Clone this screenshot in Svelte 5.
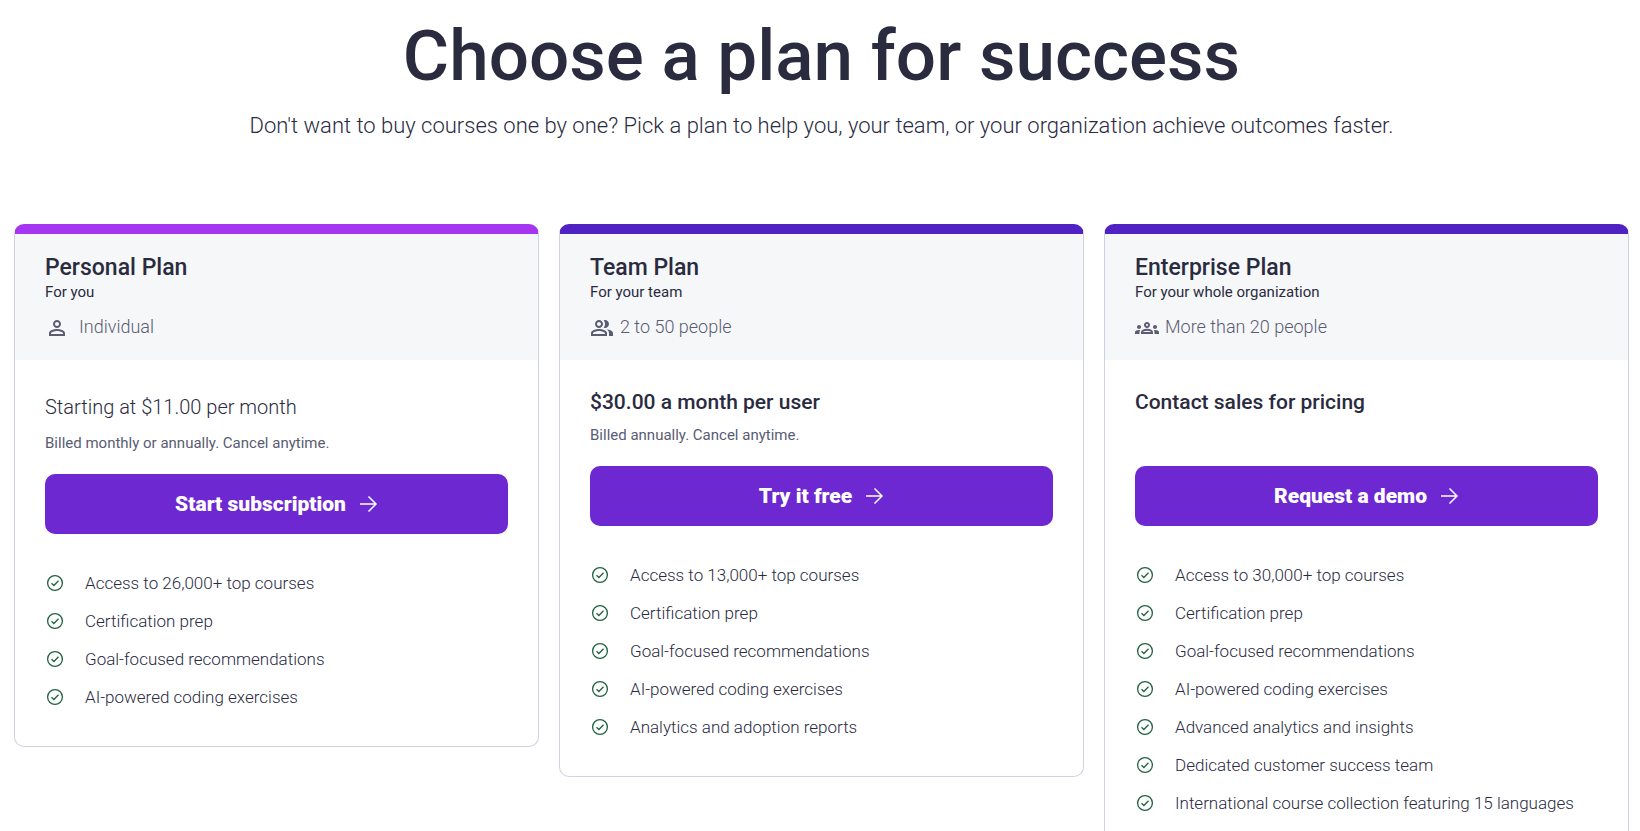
<script lang="ts">
  type Plan = {
    name: string;
    audience: string;
    size: string;
    icon: string;
    accent: string;
    price: string;
    strong: boolean;
    billing: string;
    action: string;
    features: string[];
  };

  const plans: Plan[] = [
    {
      name: "Personal Plan",
      audience: "For you",
      size: "Individual",
      icon: "person",
      accent: "light",
      price: "Starting at $11.00 per month",
      strong: false,
      billing: "Billed monthly or annually. Cancel anytime.",
      action: "Start subscription",
      features: [
        "Access to 26,000+ top courses",
        "Certification prep",
        "Goal-focused recommendations",
        "AI-powered coding exercises",
      ],
    },
    {
      name: "Team Plan",
      audience: "For your team",
      size: "2 to 50 people",
      icon: "group",
      accent: "dark",
      price: "$30.00 a month per user",
      strong: true,
      billing: "Billed annually. Cancel anytime.",
      action: "Try it free",
      features: [
        "Access to 13,000+ top courses",
        "Certification prep",
        "Goal-focused recommendations",
        "AI-powered coding exercises",
        "Analytics and adoption reports",
      ],
    },
    {
      name: "Enterprise Plan",
      audience: "For your whole organization",
      size: "More than 20 people",
      icon: "groups",
      accent: "dark",
      price: "Contact sales for pricing",
      strong: true,
      billing: "",
      action: "Request a demo",
      features: [
        "Access to 30,000+ top courses",
        "Certification prep",
        "Goal-focused recommendations",
        "AI-powered coding exercises",
        "Advanced analytics and insights",
        "Dedicated customer success team",
        "International course collection featuring 15 languages",
      ],
    },
  ];

  const icons: Record<string, string> = {
    person:
      "M12 6c1.1 0 2 .9 2 2s-.9 2-2 2-2-.9-2-2 .9-2 2-2zm0 9c2.7 0 5.8 1.29 6 2v1H6v-.99c.2-.72 3.3-2.01 6-2.01zm0-11C9.79 4 8 5.79 8 8s1.79 4 4 4 4-1.79 4-4-1.79-4-4-4zm0 9c-2.67 0-8 1.34-8 4v3h16v-3c0-2.66-5.33-4-8-4z",
    group:
      "M16.67 13.13C18.04 14.06 19 15.32 19 17v3h4v-3c0-2.18-3.57-3.47-6.33-3.87zM15 12c2.21 0 4-1.79 4-4s-1.79-4-4-4c-.47 0-.91.1-1.33.24C14.5 5.27 15 6.58 15 8s-.5 2.73-1.33 3.76c.42.14.86.24 1.33.24zM9 12c2.21 0 4-1.79 4-4s-1.79-4-4-4-4 1.79-4 4 1.79 4 4 4zm0-6c1.1 0 2 .9 2 2s-.9 2-2 2-2-.9-2-2 .9-2 2-2zM9 13c-2.67 0-8 1.34-8 4v3h16v-3c0-2.66-5.33-4-8-4zm6 5H3v-.99C3.2 16.29 6.3 15 9 15s5.8 1.29 6 2v1z",
    groups:
      "M4 13c1.1 0 2-.9 2-2s-.9-2-2-2-2 .9-2 2 .9 2 2 2zm1.13 1.1c-.37-.06-.74-.1-1.13-.1-.99 0-1.93.21-2.78.58C.48 14.9 0 15.62 0 16.43V18h4.5v-1.61c0-.83.23-1.61.63-2.29zM20 13c1.1 0 2-.9 2-2s-.9-2-2-2-2 .9-2 2 .9 2 2 2zm4 3.43c0-.81-.48-1.53-1.22-1.85-.85-.37-1.79-.58-2.78-.58-.39 0-.76.04-1.13.1.4.68.63 1.46.63 2.29V18H24v-1.57zM16.24 13.65c-1.17-.52-2.61-.9-4.24-.9s-3.07.39-4.24.9C6.68 14.13 6 15.21 6 16.39V18h12v-1.61c0-1.18-.68-2.26-1.76-2.74zM8.07 16c.09-.23.13-.39.91-.69.97-.38 1.99-.56 3.02-.56s2.05.18 3.02.56c.77.3.81.46.91.69H8.07zM12 8c.55 0 1 .45 1 1s-.45 1-1 1-1-.45-1-1 .45-1 1-1zm0-2c-1.66 0-3 1.34-3 3s1.34 3 3 3 3-1.34 3-3-1.34-3-3-3z",
  };
</script>

<main>
  <header>
    <h1>Choose a plan for success</h1>
    <p>Don't want to buy courses one by one? Pick a plan to help you, your team, or your organization achieve outcomes faster.</p>
  </header>

  <div class="plans">
    {#each plans as plan}
      <section class="card {plan.accent}">
        <div class="head">
          <h2>{plan.name}</h2>
          <p class="audience">{plan.audience}</p>
          <p class="size {plan.icon}">
            <svg viewBox="0 0 24 24" aria-hidden="true"><path d={icons[plan.icon]} /></svg>
            {plan.size}
          </p>
        </div>

        <div class="body">
          <p class="price" class:strong={plan.strong}>{plan.price}</p>
          <p class="billing">{plan.billing}</p>

          <button type="button">
            {plan.action}
            <svg viewBox="0 0 20 20" aria-hidden="true"><path d="M2 10h15.500M10.500 2.500l7.500 7.500-7.500 7.500" /></svg>
          </button>

          <ul>
            {#each plan.features as feature}
              <li>
                <svg viewBox="0 0 20 20" aria-hidden="true">
                  <circle cx="10" cy="10" r="7.400" />
                  <path d="M6.500 10.200l2.400 2.300 4.600-4.700" />
                </svg>
                {feature}
              </li>
            {/each}
          </ul>
        </div>
      </section>
    {/each}
  </div>
</main>

<style>
  :global(body) {
    margin: 0;
    background: #fff;
  }

  main {
    padding: 16px 11px 32px 14px;
    color: #2a2b3f;
    font-family: Roboto, "Liberation Sans", sans-serif;
    font-weight: 300;
  }

  h1,
  h2,
  p,
  ul {
    margin: 0;
    padding: 0;
  }

  header {
    text-align: center;
    padding-bottom: 82px;
  }

  h1 {
    font-size: 71px;
    line-height: 80px;
    font-weight: 500;
  }

  header p {
    margin-top: 14px;
    font-size: 22px;
    line-height: 32px;
  }

  .plans {
    display: grid;
    grid-template-columns: repeat(3, 1fr);
    gap: 20px;
    align-items: start;
  }

  .card {
    border: 1px solid #d1d2e0;
    border-top: 10px solid #5022c3;
    border-radius: 10px;
  }

  .light {
    border-top-color: #a435f0;
  }

  .head {
    padding: 20px 30px;
    background: #f6f7f9;
  }

  h2 {
    font-size: 23px;
    line-height: 28px;
    font-weight: 500;
  }

  .audience {
    font-size: 15px;
    line-height: 20px;
    font-weight: 400;
  }

  .size {
    display: flex;
    align-items: center;
    gap: 6px;
    margin-top: 12px;
    font-size: 18px;
    line-height: 24px;
    color: #595c73;
  }

  .size svg {
    width: 24px;
    height: 24px;
    fill: #595c73;
    margin-top: 2px;
  }

  .person {
    gap: 10px;
  }

  .body {
    padding: 30px;
  }

  .price {
    margin-bottom: 9px;
    font-size: 20px;
    line-height: 34px;
  }

  .strong {
    margin-bottom: 11px;
    font-size: 21px;
    line-height: 24px;
    font-weight: 500;
  }

  .billing {
    min-height: 20px;
    font-size: 15px;
    line-height: 20px;
    font-weight: 400;
    color: #595c73;
  }

  button {
    display: flex;
    align-items: center;
    justify-content: center;
    gap: 12px;
    width: 100%;
    height: 60px;
    margin: 21px 0 30px;
    border: 0;
    border-radius: 10px;
    background: #6d28d2;
    color: #fff;
    font-family: inherit;
    font-size: 21px;
    font-weight: 900;
    cursor: pointer;
  }

  button svg {
    width: 20px;
    height: 20px;
    fill: none;
    stroke: #fff;
    stroke-width: 1.5;
  }

  ul {
    list-style: none;
  }

  li {
    display: flex;
    align-items: center;
    gap: 20px;
    font-size: 17px;
    line-height: 38px;
  }

  li svg {
    width: 20px;
    height: 20px;
    fill: none;
    stroke: #206241;
    stroke-width: 1.3;
  }
</style>
